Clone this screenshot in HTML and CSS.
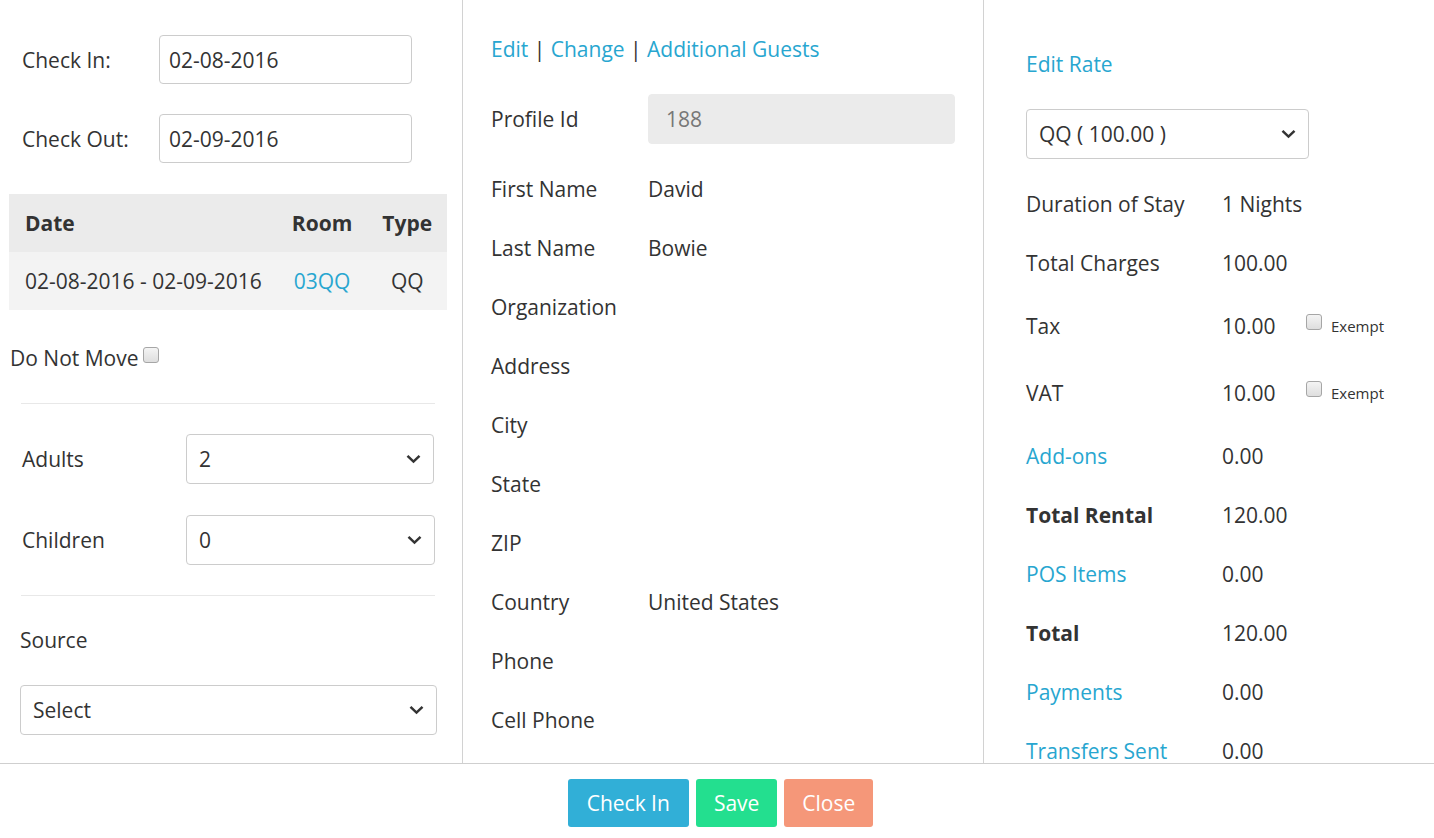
FILE: index.html
```html
<!DOCTYPE html>
<html>
<head>
<meta charset="utf-8">
<title>Reservation</title>
<link rel="stylesheet" href="styles.css">
</head>
<body>
<div class="modal">
  <div class="content">
    <div class="col col-left">
      <div class="field-row first">
        <span class="label">Check In:</span>
        <div class="input date-input">02-08-2016</div>
      </div>
      <div class="field-row second">
        <span class="label">Check Out:</span>
        <div class="input date-input">02-09-2016</div>
      </div>
      <table class="rooms">
        <thead>
          <tr><th class="c-date">Date</th><th class="c-mid">Room</th><th class="c-mid">Type</th></tr>
        </thead>
        <tbody>
          <tr><td class="c-date">02-08-2016 - 02-09-2016</td><td class="c-mid"><a class="link">03QQ</a></td><td class="c-mid">QQ</td></tr>
        </tbody>
      </table>
      <div class="dnm">Do Not Move <span class="checkbox"></span></div>
      <div class="divider d1"></div>
      <div class="sel-row adults">
        <span class="label wide">Adults</span>
        <div class="select w248"><span>2</span><svg class="chev" width="15" height="10" viewBox="0 0 15 10"><path d="M1.5 1.8 L7.5 7.6 L13.5 1.8" fill="none" stroke="#333" stroke-width="2.5"/></svg></div>
      </div>
      <div class="sel-row children">
        <span class="label wide">Children</span>
        <div class="select w249"><span>0</span><svg class="chev" width="15" height="10" viewBox="0 0 15 10"><path d="M1.5 1.8 L7.5 7.6 L13.5 1.8" fill="none" stroke="#333" stroke-width="2.5"/></svg></div>
      </div>
      <div class="divider d2"></div>
      <div class="source-label">Source</div>
      <div class="select source"><span>Select</span><svg class="chev" width="15" height="10" viewBox="0 0 15 10"><path d="M1.5 1.8 L7.5 7.6 L13.5 1.8" fill="none" stroke="#333" stroke-width="2.5"/></svg></div>
    </div>

    <div class="col col-mid">
      <div class="links"><a class="link">Edit</a> | <a class="link">Change</a> | <a class="link">Additional Guests</a></div>
      <div class="profile-row">
        <span class="mlabel">Profile Id</span>
        <div class="input disabled">188</div>
      </div>
      <div class="info">
        <div class="irow"><span class="mlabel">First Name</span><span>David</span></div>
        <div class="irow"><span class="mlabel">Last Name</span><span>Bowie</span></div>
        <div class="irow"><span class="mlabel">Organization</span><span></span></div>
        <div class="irow"><span class="mlabel">Address</span><span></span></div>
        <div class="irow"><span class="mlabel">City</span><span></span></div>
        <div class="irow"><span class="mlabel">State</span><span></span></div>
        <div class="irow"><span class="mlabel">ZIP</span><span></span></div>
        <div class="irow"><span class="mlabel">Country</span><span>United States</span></div>
        <div class="irow"><span class="mlabel">Phone</span><span></span></div>
        <div class="irow"><span class="mlabel">Cell Phone</span><span></span></div>
      </div>
    </div>

    <div class="col col-right">
      <div class="edit-rate"><a class="link">Edit Rate</a></div>
      <div class="select rate"><span>QQ ( 100.00 )</span><svg class="chev" width="15" height="10" viewBox="0 0 15 10"><path d="M1.5 1.8 L7.5 7.6 L13.5 1.8" fill="none" stroke="#333" stroke-width="2.5"/></svg></div>
      <div class="charges">
        <div class="crow"><span class="rlabel">Duration of Stay</span><span class="rval">1 Nights</span></div>
        <div class="crow"><span class="rlabel">Total Charges</span><span class="rval">100.00</span></div>
        <div class="crow tall"><span class="rlabel">Tax</span><span class="rval">10.00</span><span class="checkbox ex"></span><span class="exempt">Exempt</span></div>
        <div class="crow tall"><span class="rlabel">VAT</span><span class="rval">10.00</span><span class="checkbox ex"></span><span class="exempt">Exempt</span></div>
        <div class="crow"><a class="rlabel link">Add-ons</a><span class="rval">0.00</span></div>
        <div class="crow"><span class="rlabel bold">Total Rental</span><span class="rval">120.00</span></div>
        <div class="crow"><a class="rlabel link">POS Items</a><span class="rval">0.00</span></div>
        <div class="crow"><span class="rlabel bold">Total</span><span class="rval">120.00</span></div>
        <div class="crow"><a class="rlabel link">Payments</a><span class="rval">0.00</span></div>
        <div class="crow"><a class="rlabel link">Transfers Sent</a><span class="rval">0.00</span></div>
      </div>
    </div>
  </div>
  <div class="footer">
    <button class="btn btn-checkin">Check In</button>
    <button class="btn btn-save">Save</button>
    <button class="btn btn-close">Close</button>
  </div>
</div>
</body>
</html>
```
FILE: styles.css
```css
* { box-sizing: border-box; }
html, body { margin: 0; padding: 0; background: #fff; }
body {
  font-family: "Open Sans", "DejaVu Sans", sans-serif;
  font-size: 21px;
  color: #333;
  line-height: 28px;
}
.modal { width: 1434px; height: 838px; overflow: hidden; }
.content {
  display: grid;
  grid-template-columns: 463px 521px 1fr;
  height: 764px;
  overflow: hidden;
  border-bottom: 1px solid #cfcfcf;
}
.col { min-width: 0; }
.col-left { border-right: 1px solid #d2d2d2; }
.col-mid { border-right: 1px solid #d2d2d2; padding-left: 28px; }
.col-right { padding-left: 42px; }

.link { color: #28a6d0; text-decoration: none; cursor: pointer; }

.input {
  border: 1px solid #ccc;
  border-radius: 4px;
  display: flex;
  align-items: center;
  background: #fff;
}

/* left column */
.field-row { display: flex; align-items: center; padding-left: 22px; }
.field-row.first { margin-top: 35px; }
.field-row.second { margin-top: 30px; }
.label { width: 137px; }
.label.wide { width: 164px; }
.date-input { width: 253px; height: 49px; padding-left: 9px; }

.rooms {
  margin: 31px 0 0 9px;
  width: 438px;
  border-collapse: collapse;
}
.rooms th, .rooms td { height: 58px; padding: 0 15px; white-space: nowrap; }
.rooms .c-date { padding-left: 16px; }
.rooms th { background: #ebebeb; font-weight: 700; text-align: left; }
.rooms td { background: #f3f3f3; }
.rooms .c-mid { text-align: center; }

.dnm { margin: 34px 0 0 10px; display: flex; align-items: flex-start; }
.checkbox {
  display: inline-block;
  width: 16px;
  height: 16px;
  border: 1px solid #a6a6a6;
  border-radius: 3px;
  background: linear-gradient(#f4f4f4, #dedede);
}
.dnm .checkbox { margin: 3px 0 0 4px; }

.divider { border-top: 1px solid #e8e8e8; margin-left: 21px; width: 414px; }
.d1 { margin-top: 31px; }
.d2 { margin-top: 30px; }

.select {
  border: 1px solid #ccc;
  border-radius: 4px;
  height: 50px;
  display: flex;
  align-items: center;
  justify-content: space-between;
  padding: 0 12px 0 12px;
  background: #fff;
}
.chev { display: block; }
.sel-row { display: flex; align-items: center; padding-left: 22px; }
.sel-row.adults { margin-top: 30px; }
.sel-row.children { margin-top: 31px; }
.w248 { width: 248px; }
.w249 { width: 249px; }
.source-label { margin: 30px 0 0 20px; }
.select.source { margin: 31px 0 0 20px; width: 417px; }

/* middle column */
.links { margin-top: 35px; }
.profile-row { display: flex; align-items: center; margin-top: 31px; }
.mlabel { width: 157px; flex: none; }
.disabled {
  width: 307px;
  height: 50px;
  background: #ebebeb;
  border-color: #ebebeb;
  color: #777;
  padding-left: 17px;
}
.info { margin-top: 15px; }
.irow { display: flex; align-items: center; height: 59px; }

/* right column */
.edit-rate { margin-top: 50px; }
.select.rate { margin-top: 31px; width: 283px; }
.charges { margin-top: 15px; }
.crow { display: flex; align-items: center; height: 59px; }
.crow.tall { height: 67px; }
.rlabel { width: 196px; flex: none; }
.rval { width: 84px; flex: none; }
.bold { font-weight: 700; }
.checkbox.ex { margin-bottom: 8px; }
.exempt { font-size: 15px; margin-left: 9px; margin-top: 1px; }

/* footer */
.footer {
  display: flex;
  justify-content: center;
  align-items: flex-start;
  gap: 7px;
  padding: 15px 0 0 7px;
}
.btn {
  font-family: "Open Sans", "DejaVu Sans", sans-serif;
  font-size: 21px;
  color: #fff;
  border: none;
  border-radius: 3px;
  height: 48px;
  padding: 0 18px;
  cursor: pointer;
}
.btn-checkin { background: #31afd7; padding: 0 19px; }
.btn-save { background: #23df8f; }
.btn-close { background: #f59779; }
```
